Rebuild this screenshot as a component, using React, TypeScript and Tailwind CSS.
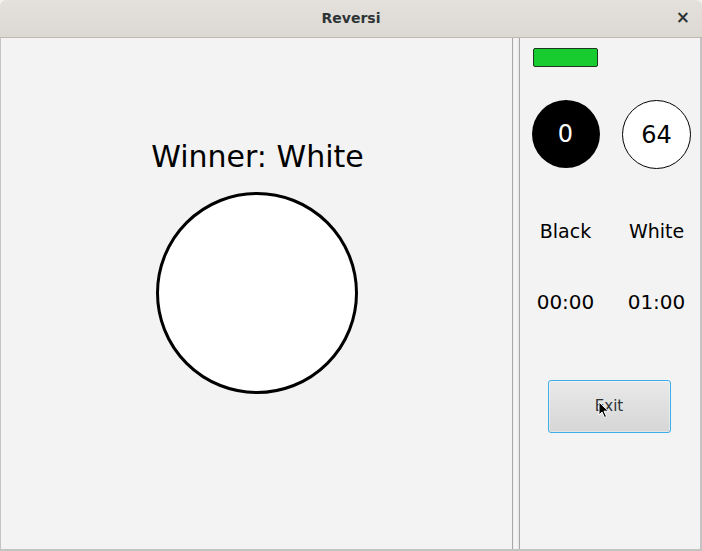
const sans = { fontFamily: '"DejaVu Sans", "Liberation Sans", sans-serif' };

function Disc({ size, stroke }: { size: number; stroke: number }) {
  const r = (size - stroke) / 2;
  return (
    <svg width={size} height={size} viewBox={`0 0 ${size} ${size}`}>
      <circle cx={size / 2} cy={size / 2} r={r} fill="#ffffff" stroke="#000000" strokeWidth={stroke} />
    </svg>
  );
}

function Pointer() {
  return (
    <svg width="12" height="18" viewBox="0 0 12 18" className="absolute left-[49px] top-[20px]">
      <path d="M1 1 L1 14 L4 11 L6.5 16.5 L8.5 15.5 L6 10.2 L10.5 10.2 Z" fill="#000" stroke="#fff" strokeWidth="1" strokeLinejoin="round" />
    </svg>
  );
}

export default function App() {
  return (
    <div className="w-[702px] h-[551px] flex flex-col bg-[#f3f3f3] text-black" style={sans}>
      <div className="relative h-[38px] shrink-0 flex items-center justify-center rounded-t-[6px] bg-gradient-to-b from-[#e4e1dd] to-[#dcd8d3] border-b border-[#bfb8b1]">
        <span className="text-[14px] font-bold text-[#2e3436]">Reversi</span>
        <span className="absolute right-[12px] top-[9px] text-[17px] font-bold text-[#2e3436] leading-none">×</span>
      </div>

      <div className="flex flex-1 min-h-0 border-l border-r-2 border-b-2 border-[#c3c3c3]">
        <div className="w-[511px] shrink-0 flex flex-col items-center pt-[100px]">
          <div className="text-[30px] leading-[38px] ml-[2px]">Winner: White</div>
          <div className="mt-[16px] ml-[1px]">
            <Disc size={202} stroke={3} />
          </div>
        </div>

        <div className="w-[8px] shrink-0 border-l border-r border-[#a8a8a8] bg-gradient-to-r from-[#ececec] via-[#f8f8f8] to-[#e6e6e6]" />

        <div className="flex-1 min-w-0 flex flex-col">
          <div className="ml-[13px] mt-[10px] w-[65px] h-[19px] rounded-[2px] border border-[#1e3a1e] bg-[#18cc2f]" />

          <div className="grid grid-cols-[91px_89px] mt-[33px] justify-items-center">
            <div className="w-[68px] h-[68px] rounded-full bg-black flex items-center justify-center text-white text-[24px]">0</div>
            <div className="w-[69px] h-[69px] rounded-full bg-white border border-black flex items-center justify-center text-[24px] -mr-[2px]">64</div>
          </div>

          <div className="grid grid-cols-[91px_89px] mt-[50px] justify-items-center text-[19px] leading-[24px]">
            <span>Black</span>
            <span className="-mr-[2px]">White</span>
          </div>

          <div className="grid grid-cols-[91px_89px] mt-[47px] justify-items-center text-[20px] leading-[24px]">
            <span>00:00</span>
            <span className="-mr-[2px]">01:00</span>
          </div>

          <div className="flex justify-center mt-[66px] pr-[2px]">
            <div className="relative w-[123px] h-[53px] rounded-[3px] border border-[#3daee9] bg-gradient-to-b from-[#e9e9e9] to-[#d6d6d6] flex items-center justify-center text-[15px] text-[#2e3436] shadow-[inset_0_0_0_1px_rgba(255,255,255,0.4)]">
              Exit
              <Pointer />
            </div>
          </div>
        </div>
      </div>
    </div>
  );
}
